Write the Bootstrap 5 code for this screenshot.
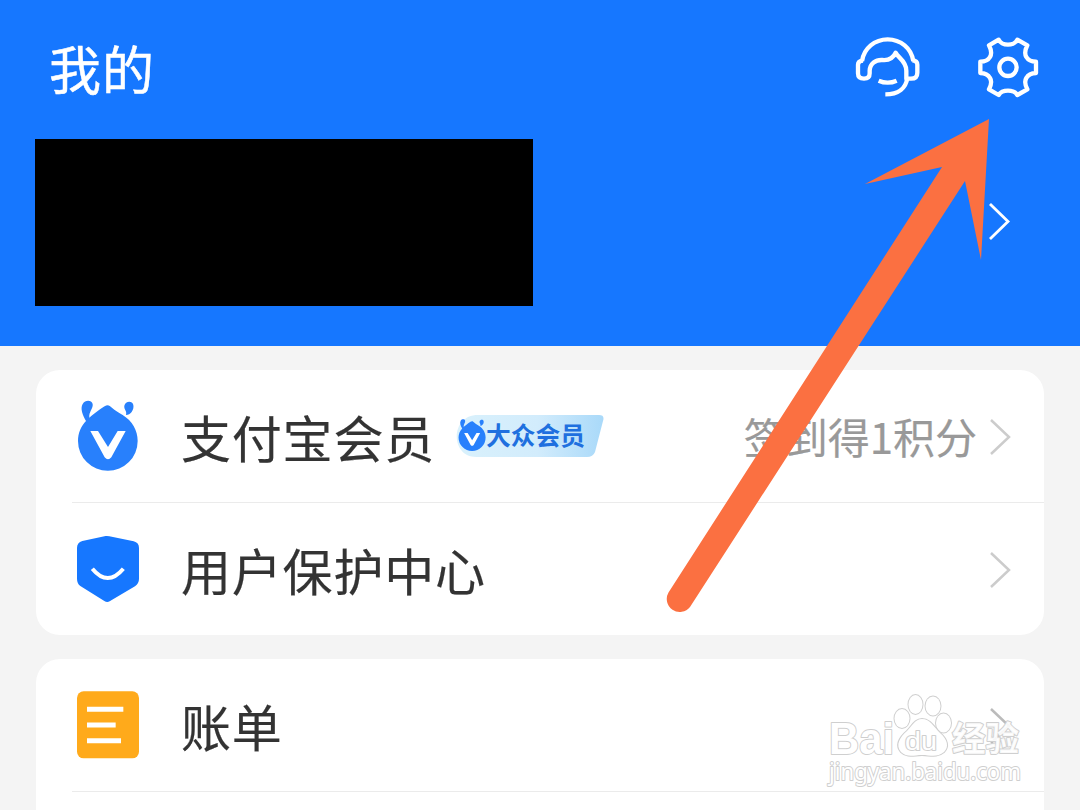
<!DOCTYPE html>
<html lang="zh-CN">
<head>
  <meta charset="UTF-8">
  <meta name="viewport" content="width=device-width, initial-scale=1.0">
  <title>我的</title>
  <link href="https://cdn.jsdelivr.net/npm/bootstrap@5.3.0/dist/css/bootstrap.min.css" rel="stylesheet">
  <style>
    body { background: #f4f4f4; font-family: "Noto Sans CJK SC", sans-serif; width: 1080px; height: 810px; overflow: hidden; }
    svg { display: block; flex: none; }
    .my-header { height: 346px; background: #1677ff; padding: 0 38px 0 35px; }
    .top-row { height: 139px; padding-left: 14px; }
    .page-title { font-size: 52px; line-height: 136px; color: #fff; font-weight: 400; margin: 0; letter-spacing: 1px; -webkit-text-stroke: .5px #fff; }
    .top-icons { padding-top: 34px; gap: 52px; }
    .profile-box { width: 498px; height: 167px; background: #000; }
    .profile-arrow { margin: 0 30px 2px 0; }
    .menu-list { margin: 24px 36px 0; }
    .menu-card { background: #fff; border-radius: 24px; height: 265px; }
    .menu-card-cut { height: 151px; border-radius: 24px 24px 0 0; }
    .menu-row { height: 133px; padding: 0 33px 0 40px; }
    .menu-line { height: 1px; background: #ebebeb; margin: -1px 0 0 36px; }
    .menu-icon { margin-bottom: 2px; }
    .menu-label { font-size: 50px; line-height: 60px; letter-spacing: .8px; color: #333; margin: 0 0 2px 41px; white-space: nowrap; -webkit-text-stroke: .2px #333; }
    .menu-hint { font-size: 42px; line-height: 50px; color: #999; margin: 0 12px 2px 0; white-space: nowrap; -webkit-text-stroke: .2px #999; }
    .vip-icon { margin-bottom: 5px; }
    .level-tag { margin-left: 19px; margin-bottom: 1px; }
  </style>
</head>
<body class="position-relative">
  <header class="my-header">
    <div class="top-row d-flex justify-content-between align-items-start">
      <h1 class="page-title">我的</h1>
      <div class="top-icons d-flex">
        <!-- customer service -->
        <svg width="70" height="65" viewBox="40 42 210 195" fill="none" stroke="#fff" stroke-width="13" stroke-linejoin="round">
          <path d="M67 124C72 84 106 58 144 58S216 84 221 124"/>
          <path d="M70 122Q55 123 55 134V160Q55 176 73 176Q90 176 90 160V152C91 130 108 119 128 120C149 122 161 114 168 98C174 113 200 122 200 152V176H214Q233 176 233 158V134Q233 122 218 121"/>
          <path d="M203 174C199 204 176 223 137 223M117 182Q144 194 171 182"/>
        </svg>
        <!-- settings -->
        <svg width="67" height="65" viewBox="405 42 201 195" fill="none" stroke="#fff" stroke-width="13" stroke-linejoin="round">
          <path d="M447 76L476 59Q484 74 504 74Q524 74 532 59L562 76Q551 98 559 111Q567 125 588 125V159Q567 160 559 174Q551 187 562 208L532 225Q524 212 504 212Q484 212 476 225L447 208Q458 187 450 174Q442 160 421 159V125Q442 125 450 111Q458 98 447 76Z"/>
          <circle cx="504" cy="142" r="26"/>
        </svg>
      </div>
    </div>
    <div class="d-flex justify-content-between align-items-center">
      <div class="profile-box"></div>
      <svg class="profile-arrow" width="24" height="40" viewBox="0 0 24 40" fill="none" stroke="#fff" stroke-width="2.8"><path d="M2 2L20 19.500L2 37"/></svg>
    </div>
  </header>

  <main class="menu-list">
    <section class="menu-card">
      <div class="menu-row d-flex align-items-center">
        <svg class="vip-icon" width="64" height="75" viewBox="48 37 192 225">
          <g id="vip">
            <path fill="#2880fc" d="M143 62C151 62 159 76 188 91C217 109 233 137 233 169A89.500 89.500 0 0 1 54 169C54 146 63 124 78 109C68 91 60 72 68 58C75 46 94 45 98 58C100 73 86 80 88 99C105 86 133 62 143 62ZM198 91C202 77 191 75 193 63C196 49 217 47 220 61C223 76 211 91 198 91Z"/>
            <path fill="#fff" d="M91 139H114L144 187L173 139H197L154 218Q144 230 134 218Z"/>
          </g>
        </svg>
        <span class="menu-label">支付宝会员</span>
        <svg class="level-tag" width="153" height="44" viewBox="0 0 153 44">
          <defs>
            <linearGradient id="tagFill" x1="0" x2="1">
              <stop offset="0" stop-color="#d9f1fc"/>
              <stop offset=".55" stop-color="#d2ecfc"/>
              <stop offset="1" stop-color="#a9d9f9"/>
            </linearGradient>
          </defs>
          <path fill="url(#tagFill)" d="M24 1H145Q151 1 149 7L141 38Q139 43 133 43H22C-4 43-4 1 24 1Z"/>
          <svg x="3" y="4" width="30" height="34" viewBox="47 40 192 225"><use href="#vip"/></svg>
          <text x="32" y="31" font-size="25" font-weight="700" fill="#1f70df" textLength="99" lengthAdjust="spacingAndGlyphs">大众会员</text>
        </svg>
        <span class="menu-hint ms-auto">签到得1积分</span>
        <svg width="22" height="38" viewBox="0 0 22 38" fill="none" stroke="#ccc" stroke-width="2.500"><path d="M2 2L20 19L2 36"/></svg>
      </div>
      <div class="menu-line"></div>
      <div class="menu-row d-flex align-items-center">
        <svg class="menu-icon" width="64" height="70" viewBox="48 42 192 210">
          <path fill="#1677ff" d="M137 48Q142 47 148 49L221 64Q237 68 237 84V176Q237 190 225 199L149 244Q141 248 133 243L61 198Q51 190 51 176V84Q51 68 67 63Z"/>
          <path d="M97 146Q143 202 190 146" fill="none" stroke="#fff" stroke-width="12"/>
        </svg>
        <span class="menu-label">用户保护中心</span>
        <svg class="ms-auto" width="22" height="38" viewBox="0 0 22 38" fill="none" stroke="#ccc" stroke-width="2.500"><path d="M2 2L20 19L2 36"/></svg>
      </div>
    </section>

    <section class="menu-card menu-card-cut mt-4">
      <div class="menu-row d-flex align-items-center">
        <svg class="menu-icon" width="64" height="68" viewBox="48 48 192 204">
          <rect x="51" y="49" width="186" height="201" rx="20" fill="#ffaa1b"/>
          <path d="M81 103H190M81 150H167M81 197H183" stroke="#fff" stroke-width="15"/>
        </svg>
        <span class="menu-label">账单</span>
        <svg class="ms-auto" width="22" height="38" viewBox="0 0 22 38" fill="none" stroke="#bbb" stroke-width="2.500"><path d="M2 2L20 19L2 36"/></svg>
      </div>
      <div class="menu-line"></div>
    </section>
  </main>

  <!-- pointer and site mark lie over the whole screen -->
  <svg class="position-absolute top-0 start-0" width="1080" height="810" viewBox="0 0 1080 810">
    <path fill="#fb7041" d="M989 119L981 260L965 181L690 607A13 13 0 0 1 668.500 592.500L942 167L865 184Z"/>
    <g fill="#fff" stroke="#cfcfcf" stroke-width="2" stroke-linejoin="round" paint-order="stroke">
      <text x="829" y="754" font-family="Liberation Sans, sans-serif" font-size="44" font-weight="700" textLength="65" lengthAdjust="spacingAndGlyphs">Bai</text>
      <ellipse cx="902" cy="718.500" rx="7.500" ry="9.500"/>
      <ellipse cx="915.500" cy="704.500" rx="7" ry="9.500"/>
      <ellipse cx="933" cy="706" rx="7.500" ry="9.500"/>
      <ellipse cx="943.500" cy="723" rx="7.500" ry="9.500"/>
      <path d="M922 719C930 719 934 727 940 733C948 740 949 747 944 752C937 758 930 755 922 755S907 758 901 752C895 745 900 737 907 731C912 726 915 719 922 719Z"/>
      <text x="905" y="750" font-family="Liberation Sans, sans-serif" font-size="25" font-weight="400" textLength="32" lengthAdjust="spacingAndGlyphs">du</text>
      <text x="952" y="751" font-family="Noto Sans CJK SC, sans-serif" font-size="34" font-weight="700" fill-opacity=".9" textLength="67" lengthAdjust="spacingAndGlyphs">经验</text>
      <text x="829" y="780" font-family="Noto Sans, sans-serif" font-size="23" font-weight="400" textLength="192" lengthAdjust="spacingAndGlyphs">jingyan.baidu.com</text>
    </g>
  </svg>

  <script src="https://cdn.jsdelivr.net/npm/bootstrap@5.3.0/dist/js/bootstrap.bundle.min.js"></script>
</body>
</html>
